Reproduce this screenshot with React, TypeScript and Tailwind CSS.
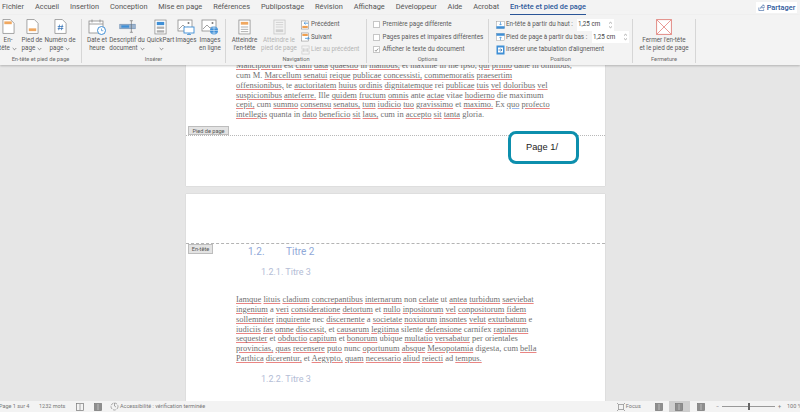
import React from "react";

const UI = { fontFamily: 'Roboto,"Noto Sans",sans-serif' };

function W({ s }: { s: string }) {
  const parts = s.split(" ");
  return (
    <>
      {parts.map((p, i) => {
        const sp = i < parts.length - 1 ? " " : "";
        if (p.startsWith("~")) {
          return (
            <React.Fragment key={i}>
              <span className="underline decoration-solid decoration-[#ea8583] decoration-[1px] underline-offset-[1px]">{p.slice(1)}</span>
              {sp}
            </React.Fragment>
          );
        }
        if (p.startsWith("^")) {
          return (
            <React.Fragment key={i}>
              <span className="underline decoration-solid decoration-[#9db8ea] decoration-[1px] underline-offset-[1px]">{p.slice(1)}</span>
              {sp}
            </React.Fragment>
          );
        }
        return <React.Fragment key={i}>{p + sp}</React.Fragment>;
      })}
    </>
  );
}

function Body({ lines }: { lines: string[] }) {
  return (
    <div className="text-[8.45px] leading-[9.78px] text-[#6f6f6f] whitespace-nowrap font-['Liberation_Serif',serif]">
      {lines.map((l, i) => (
        <div key={i} className="h-[9.78px]">
          <W s={l} />
        </div>
      ))}
    </div>
  );
}

function Doc({ k }: { k: string }) {
  const blue = "#3f8fd6";
  const orange = "#f0a860";
  const g = "#8a8a8a";
  const common = { fill: "none", stroke: g, strokeWidth: 0.8 };
  switch (k) {
    case "head":
      return (
        <svg width="13" height="15" viewBox="0 0 14 16">
          <path d="M1 .5h8l4 4v11H1z" fill="#fff" stroke={g} strokeWidth="0.8" />
          <rect x="2.5" y="2.5" width="8" height="3" fill={orange} />
        </svg>
      );
    case "foot":
      return (
        <svg width="13" height="15" viewBox="0 0 14 16">
          <path d="M1 .5h8l4 4v11H1z" fill="#fff" stroke={g} strokeWidth="0.8" />
          <rect x="3" y="10" width="8" height="3" fill={orange} />
        </svg>
      );
    case "num":
      return (
        <svg width="13" height="15" viewBox="0 0 14 16">
          <path d="M1 .5h8l4 4v11H1z" fill="#fff" stroke={g} strokeWidth="0.8" />
          <path d="M6 6l-1 6M9 6l-1 6M4 8h6M4 10.2h6" stroke="#2f6fb5" strokeWidth="0.8" fill="none" />
        </svg>
      );
    case "date":
      return (
        <svg width="18" height="16" viewBox="0 0 18 16">
          <rect x="1" y="2" width="14" height="12" fill="#fff" stroke={g} strokeWidth="0.8" />
          <path d="M1 5h14M4 .5v3M12 .5v3" {...common} />
          <circle cx="13.5" cy="11.5" r="4" fill="#fff" stroke={blue} strokeWidth="1" />
          <path d="M13.5 9.5v2.2h1.8" stroke={blue} strokeWidth="0.7" fill="none" />
        </svg>
      );
    case "desc":
      return (
        <svg width="17" height="15" viewBox="0 0 22 16">
          <rect x="1" y="5" width="20" height="6" fill="#9cb4cf" stroke="#5a7fa8" strokeWidth="0.6" />
          <rect x="3" y="6.5" width="10" height="3" fill={blue} />
          <path d="M14 .5h4M16 .5v15M14 15.5h4" stroke="#666" strokeWidth="0.8" fill="none" />
        </svg>
      );
    case "quick":
      return (
        <svg width="13" height="16" viewBox="0 0 14 16">
          <rect x="1" y="0.5" width="12" height="15" fill="#fff" stroke={g} strokeWidth="0.8" />
          <rect x="3" y="2.5" width="8" height="3.5" fill={blue} />
          <rect x="3" y="7.5" width="8" height="2.5" fill="#b0b0b0" />
          <rect x="3" y="11.5" width="8" height="2.5" fill="#b0b0b0" />
        </svg>
      );
    case "img":
      return (
        <svg width="18" height="16" viewBox="0 0 18 16">
          <rect x="1" y="1" width="14" height="11" fill="#fff" stroke={g} strokeWidth="0.8" />
          <path d="M2 10l4-4 3 3 2-1 3 2" {...common} />
          <circle cx="11.5" cy="4" r="1" fill="#777" />
          <rect x="7" y="8" width="10" height="6" fill="#fff" stroke={blue} strokeWidth="0.9" />
          <path d="M12 14v1.5M10 15.5h4" stroke={blue} strokeWidth="0.8" />
        </svg>
      );
    case "online":
      return (
        <svg width="18" height="16" viewBox="0 0 18 16">
          <rect x="1" y="1" width="14" height="11" fill="#fff" stroke={g} strokeWidth="0.8" />
          <path d="M2 10l4-4 3 3 2-1 3 2" {...common} />
          <circle cx="11.5" cy="4" r="1" fill="#777" />
          <circle cx="13" cy="11.5" r="4" fill={blue} />
          <path d="M9 11.5h8M13 7.5v8M10.5 9h5M10.5 14h5" stroke="#fff" strokeWidth="0.5" fill="none" />
        </svg>
      );
    case "gotoH":
      return (
        <svg width="13" height="16" viewBox="0 0 14 16">
          <rect x="1" y="0.5" width="12" height="15" fill="#fff" stroke={g} strokeWidth="0.8" />
          <rect x="3" y="2.5" width="8" height="3" fill={orange} />
          <rect x="3" y="7.5" width="8" height="1" fill="#aaa" />
          <rect x="3" y="10" width="8" height="1" fill="#aaa" />
          <rect x="3" y="12.5" width="8" height="1" fill="#aaa" />
        </svg>
      );
    case "gotoF":
      return (
        <svg width="13" height="16" viewBox="0 0 14 16">
          <rect x="1" y="0.5" width="12" height="15" fill="none" stroke="#c4c4c4" strokeWidth="0.8" />
          <rect x="3" y="2.5" width="8" height="1" fill="#d0d0d0" />
          <rect x="3" y="5" width="8" height="1" fill="#d0d0d0" />
          <rect x="3" y="7.5" width="8" height="1" fill="#d0d0d0" />
          <rect x="3" y="10.5" width="8" height="3" fill="#d0d0d0" />
        </svg>
      );
    case "close":
      return (
        <svg width="16" height="16" viewBox="0 0 16 16">
          <rect x="0.6" y="0.6" width="14.8" height="14.8" fill="#fff" stroke="#e28a84" strokeWidth="1" />
          <path d="M1 1l14 14M15 1L1 15" stroke="#e0706a" strokeWidth="0.7" />
        </svg>
      );
    default:
      return null;
  }
}

function Small({ k }: { k: string }) {
  const blue = "#3f8fd6";
  const orange = "#ef9f50";
  if (k === "prev" || k === "next")
    return (
      <svg width="9" height="10" viewBox="0 0 10 10" className="shrink-0">
        <rect x="0.5" y="0.5" width="8" height="9" fill="#fff" stroke="#8a8a8a" strokeWidth="0.6" />
        <rect x="1.5" y={k === "prev" ? 6 : 1.5} width="6" height="2.4" fill={orange} />
        <path d={k === "prev" ? "M8 3H3.5M5 1.5L3.5 3 5 4.5" : "M9 6.5H4.5M7.5 5L9 6.5 7.5 8"} stroke={blue} strokeWidth="0.9" fill="none" />
      </svg>
    );
  if (k === "link")
    return (
      <svg width="9" height="10" viewBox="0 0 10 10" className="shrink-0">
        <rect x="1" y="0.5" width="8" height="3.5" fill="none" stroke="#c8c8c8" strokeWidth="0.7" />
        <rect x="1" y="6" width="8" height="3.5" fill="none" stroke="#c8c8c8" strokeWidth="0.7" />
        <path d="M3 3v4M7 3v4" stroke="#c8c8c8" strokeWidth="0.7" />
      </svg>
    );
  if (k === "top" || k === "bot")
    return (
      <svg width="9" height="10" viewBox="0 0 11 10" className="shrink-0">
        <rect x="0.5" y="0.5" width="10" height="9" fill="#fff" stroke="#8a8a8a" strokeWidth="0.5" />
        <rect x="0.5" y={k === "top" ? 6.5 : 0.5} width="10" height="3" fill={blue} />
        <path d={k === "top" ? "M5.5 1v4M4 3.6l1.5 1.6L7 3.6" : "M5.5 9V5M4 6.4l1.5-1.6L7 6.4"} stroke={blue} strokeWidth="0.8" fill="none" />
      </svg>
    );
  return (
    <svg width="9" height="10" viewBox="0 0 9 10" className="shrink-0">
      <rect x="0.5" y="0.5" width="8" height="9" fill="#3f8fd6" />
      <rect x="2" y="2.5" width="5" height="5" fill="#fff" />
      <path d="M2.5 5h3.5M4.5 3.7L6 5 4.5 6.3" stroke="#2b6ca8" strokeWidth="0.7" fill="none" />
    </svg>
  );
}

const Chev = () => (
  <svg width="5" height="4" viewBox="0 0 5 4" className="inline-block ml-[2px]">
    <path d="M.7 1l1.8 1.8L4.3 1" stroke="#666" strokeWidth="0.7" fill="none" />
  </svg>
);

function Big({ w, icon, l1, l2, chev, off }: { w: string; icon: string; l1: string; l2: string; chev?: boolean; off?: boolean }) {
  return (
    <div className={`${w} flex flex-col items-center shrink-0 ${off ? "text-[#b4b4b4]" : "text-[#5a5a5a]"}`}>
      <div className="h-[17px] flex items-start justify-center"><Doc k={icon} /></div>
      <div className="text-[6.3px] leading-[8.8px] text-center whitespace-nowrap">
        <div>{l1}</div>
        <div className="h-[9px]">{l2}{chev && <Chev />}</div>
      </div>
    </div>
  );
}

function Group({ w, label, children }: { w: string; label: string; children: React.ReactNode }) {
  return (
    <div className={`${w} shrink-0 h-[44px] border-r border-[#d6d6d6] flex flex-col`}>
      <div className="h-[36px] flex">{children}</div>
      <div className="text-[5.7px] leading-[8px] text-center text-[#6a6a6a]">{label}</div>
    </div>
  );
}

function Row({ icon, text, off }: { icon: string; text: string; off?: boolean }) {
  return (
    <div className={`h-[12.5px] flex items-center whitespace-nowrap text-[6.3px] ${off ? "text-[#b4b4b4]" : "text-[#5a5a5a]"}`}>
      <Small k={icon} />
      <span className="ml-[1px]">{text}</span>
    </div>
  );
}

function Check({ text, on }: { text: string; on?: boolean }) {
  return (
    <div className="h-[12.5px] flex items-center gap-[2.5px] whitespace-nowrap text-[6.3px] text-[#5a5a5a]">
      <span className="w-[7px] h-[7px] bg-white border-[0.5px] border-[#c6c6c6] flex items-center justify-center">
        {on && (
          <svg width="6" height="6" viewBox="0 0 6 6">
            <path d="M1 3l1.4 1.5L5 1.3" stroke="#555" strokeWidth="0.7" fill="none" />
          </svg>
        )}
      </span>
      {text}
    </div>
  );
}

function Spin() {
  return (
    <span className="w-[37px] h-[12px] bg-white flex items-center justify-between px-[1px] text-[6.3px] text-[#444] shrink-0">
      1,25 cm
      <svg width="5" height="8" viewBox="0 0 5 8">
        <path d="M1 2.5l1.5-1.2L4 2.5M1 5.5l1.5 1.2L4 5.5" stroke="#777" strokeWidth="0.6" fill="none" />
      </svg>
    </span>
  );
}

function Tag({ t, w }: { t: string; w: string }) {
  return (
    <span className={`${w} h-[9.5px] block bg-[#e3e3e3] border border-[#bdbdbd] text-[5.6px] leading-[8px] text-center text-[#555] whitespace-nowrap`} style={UI}>
      {t}
    </span>
  );
}

const StatusIcon = ({ dark }: { dark?: boolean }) => (
  <svg width="8" height="8" viewBox="0 0 8 8">
    <rect x="0.5" y="0.5" width="7" height="7" fill={dark ? "#8e8e8e" : "none"} stroke="#777" strokeWidth="0.7" />
    <path d="M4 1v6" stroke={dark ? "#ddd" : "#777"} strokeWidth="0.6" />
  </svg>
);

export default function App() {
  const tabs = ["Fichier", "Accueil", "Insertion", "Conception", "Mise en page", "Références", "Publipostage", "Révision", "Affichage", "Développeur", "Aide", "Acrobat"];
  return (
    <div className="w-[800px] h-[412px] overflow-hidden flex flex-col bg-[#e6e6e6]" style={UI}>
      <div className="h-[15px] bg-[#f3f3f3] flex items-start pl-[2px] shrink-0">
        <div className="flex gap-[10.9px] pt-[2px] text-[7.4px] leading-[10px] text-[#555] whitespace-nowrap">
          {tabs.map((t) => (
            <span key={t}>{t}</span>
          ))}
          <span className="text-[#2b579a] font-medium border-b border-[#2b579a] h-[13px]">En-tête et pied de page</span>
        </div>
        <div className="ml-auto mr-[3px] mt-[2px] w-[41px] h-[11px] bg-white flex items-center justify-center gap-[2px] text-[7.4px] font-medium text-[#2b579a]">
          <svg width="7" height="7" viewBox="0 0 8 8">
            <path d="M1 4v3.5h5.5V6M3 5c0-2 1.5-3 3-3V.8L8 3 6 5V3.8C5 3.8 3.8 4 3 5z" fill="none" stroke="#2b579a" strokeWidth="0.7" />
          </svg>
          Partager
        </div>
      </div>
      <div className="h-[50px] bg-[#f3f3f3] flex pt-[3.5px] shrink-0 shadow-[0_1px_2px_rgba(0,0,0,0.22)] z-10 relative">
        <Group w="w-[82px]" label="En-tête et pied de page">
          <Big w="w-[16px]" icon="head" l1="En-" l2="tête" chev />
          <Big w="w-[32px]" icon="foot" l1="Pied de" l2="page" chev />
          <Big w="w-[24px]" icon="num" l1="Numéro de" l2="page" chev />
        </Group>
        <Group w="w-[144px]" label="Insérer">
          <div className="w-[3px] shrink-0" />
          <Big w="w-[24px]" icon="date" l1="Date et" l2="heure" />
          <Big w="w-[36px]" icon="desc" l1="Descriptif du" l2="document" chev />
          <Big w="w-[31px]" icon="quick" l1="QuickPart" l2="" chev />
          <Big w="w-[20px]" icon="img" l1="Images" l2="" />
          <div className="w-[2px] shrink-0" />
          <Big w="w-[24px]" icon="online" l1="Images" l2="en ligne" />
        </Group>
        <Group w="w-[141px]" label="Navigation">
          <div className="w-[1px] shrink-0" />
          <Big w="w-[35px]" icon="gotoH" l1="Atteindre" l2="l'en-tête" />
          <Big w="w-[34px]" icon="gotoF" l1="Atteindre le" l2="pied de page" off />
          <div className="pl-[5px]">
            <Row icon="prev" text="Précédent" />
            <Row icon="next" text="Suivant" />
            <Row icon="link" text="Lier au précédent" off />
          </div>
        </Group>
        <Group w="w-[122px]" label="Options">
          <div className="pl-[6px]">
            <Check text="Première page différente" />
            <Check text="Pages paires et impaires différentes" />
            <Check text="Afficher le texte du document" on />
          </div>
        </Group>
        <Group w="w-[144px]" label="Position">
          <div className="pl-[7px]">
            <div className="h-[12.5px] flex items-center whitespace-nowrap text-[6.3px] text-[#5a5a5a]">
              <Small k="top" />
              <span className="ml-[1px] w-[71px]">En-tête à partir du haut :</span>
              <Spin />
            </div>
            <div className="h-[12.5px] flex items-center whitespace-nowrap text-[6.3px] text-[#5a5a5a]">
              <Small k="bot" />
              <span className="ml-[1px] w-[86px]">Pied de page à partir du bas :</span>
              <Spin />
            </div>
            <Row icon="ins" text="Insérer une tabulation d'alignement" />
          </div>
        </Group>
        <Group w="w-[63px]" label="Fermeture">
          <Big w="w-[62px]" icon="close" l1="Fermer l'en-tête" l2="et le pied de page" />
        </Group>
      </div>

      <div className="flex-1 min-h-0 overflow-hidden flex flex-col pl-[186px]">
        <div className="w-[419px] shrink-0 bg-white shadow-[0_0_1px_rgba(0,0,0,0.2)] h-[121px] relative">
          <div className="pl-[50px] -mt-[3.8px] h-[58px] overflow-hidden">
            <Body
              lines={[
                "~Mancipiorum est ~clam ~data ~quaestio in ~manibus, et maxime in me ipso, ~qui ~primo dane in omnibus,",
                "cum M. ~Marcellum ~senatui ~reique ~publicae ~concessisti, ~commemoratis ~praesertim",
                "~offensionibus, te ~auctoritatem ~huius ~ordinis ~dignitatemque rei ~publicae ~tuis ~vel ~doloribus ~vel",
                "~suspicionibus ~anteferre. Ille ~quidem ~fructum ~omnis ante ~actae vitae ~hodierno die maximum",
                "~cepit, cum ~summo ~consensu ~senatus, ~tum ~iudicio ~tuo ~gravissimo et ~maximo. Ex ^quo ~profecto",
                "~intellegis quanta in ~dato ~beneficio ~sit ~laus, cum in ~accepto ~sit ~tanta gloria.",
              ]}
            />
          </div>
          <div className="mt-[6.7px] pl-[2px]"><Tag t="Pied de page" w="w-[41px]" /></div>
          <div className="border-t border-dotted border-[#b8b8b8]" />
          <div className="absolute left-[322px] top-[66px] w-[71px] h-[33px] rounded-[8px] border-[3px] border-[#0d8fad] bg-white flex items-center pl-[15px] text-[9.3px] text-[#222] font-['Liberation_Sans',sans-serif]">
            Page 1/
          </div>
        </div>
        <div className="w-[419px] shrink-0 mt-[8px] bg-white shadow-[0_0_1px_rgba(0,0,0,0.2)] h-[207px] relative">
          <div className="h-[49px]" />
          <div className="border-t border-dashed border-[#b4b4b4]" />
          <div className="pl-[2px]"><Tag t="En-tête" w="w-[25px]" /></div>
          <div className="-mt-[8.5px] pl-[62px] flex text-[10px] leading-[14px] text-[#8fa8d8]">
            <span className="w-[38px]">1.2.</span>
            <span>Titre 2</span>
          </div>
          <div className="mt-[7px] pl-[75px] text-[9px] leading-[12px] text-[#b4bdd6]">1.2.1. Titre 3</div>
          <div className="mt-[17.4px] pl-[50px]">
            <Body
              lines={[
                "~Iamque ~lituis ~cladium ~concrepantibus ~internarum non ~celate ut ~antea ~turbidum ~saeviebat",
                "~ingenium a ~veri ~consideratione ~detortum et ~nullo ~inpositorum ~vel ~conpositorum ~fidem",
                "~sollemniter ~inquirente nec ~discernente a ~societate ~noxiorum ~insontes ~velut ~exturbatum e",
                "~iudiciis ~fas ~omne ~discessit, et ~causarum ~legitima silente ~defensione carnifex ~rapinarum",
                "~sequester et ~obductio ~capitum et ~bonorum ubique ~multatio ~versabatur per orientales",
                "~provincias, ~quas ~recensere ~puto nunc ~oportunum ~absque ~Mesopotamia digesta, cum ~bella",
                "~Parthica ~dicerentur, et ~Aegypto, ~quam ~necessario ~aliud ~reiecti ad ~tempus.",
              ]}
            />
          </div>
          <div className="mt-[9px] pl-[75px] text-[9px] leading-[12px] text-[#b4bdd6]">1.2.2. Titre 3</div>
        </div>
      </div>

      <div className="h-[11px] shrink-0 bg-[#f3f3f3] flex items-center text-[5.5px] text-[#777] whitespace-nowrap">
        <span className="-ml-[1px] w-[40px] shrink-0">Page 1 sur 4</span>
        <span className="w-[37px] shrink-0">1232 mots</span>
        <span className="w-[18px] shrink-0"><StatusIcon /></span>
        <span className="w-[16px] shrink-0"><StatusIcon dark /></span>
        <span className="flex items-center gap-[1px]">
          <svg width="9" height="9" viewBox="0 0 9 9">
            <circle cx="4.5" cy="4.5" r="3.5" fill="none" stroke="#777" strokeWidth="0.6" strokeDasharray="3 1" />
            <path d="M4.5 1v3l1.5 1" stroke="#777" strokeWidth="0.6" fill="none" />
          </svg>
          Accessibilité : vérification terminée
        </span>
        <span className="ml-auto flex items-center h-full">
          <span className="flex items-center gap-[1px] mr-[14px]">
            <svg width="8" height="8" viewBox="0 0 8 8">
              <path d="M1.5 1.5h5v5h-5zM0 0l1.5 1.5M8 0L6.5 1.5M0 8l1.5-1.5M8 8L6.5 6.5" stroke="#777" strokeWidth="0.6" fill="none" />
            </svg>
            Focus
          </span>
          <StatusIcon dark />
          <span className="ml-[6px] w-[21px] h-full bg-[#cfcfcf] flex items-center justify-center"><StatusIcon dark /></span>
          <span className="ml-[7px]"><StatusIcon dark /></span>
          <span className="ml-[11px]">−</span>
          <span className="ml-[3px] w-[53px] h-px bg-[#999] relative block">
            <span className="absolute left-[26px] -top-[3px] w-[2px] h-[7px] bg-[#666] block" />
          </span>
          <span className="ml-[3px]">+</span>
          <span className="ml-[6px] w-[13px] overflow-hidden">100 %</span>
        </span>
      </div>
    </div>
  );
}
